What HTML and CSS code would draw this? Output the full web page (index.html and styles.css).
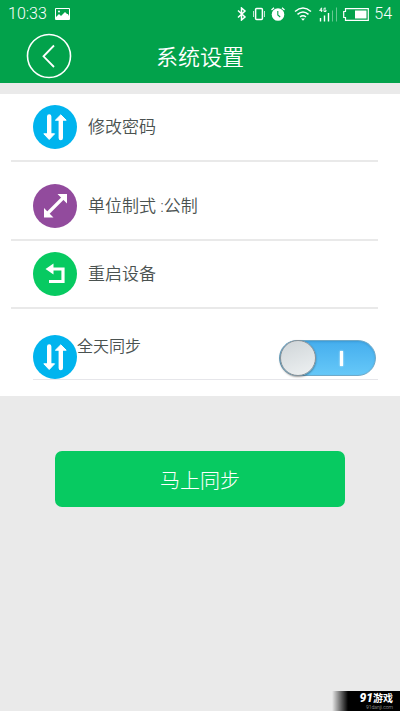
FILE: index.html
```html
<!DOCTYPE html>
<html lang="zh-CN">
<head>
<meta charset="utf-8">
<meta name="viewport" content="width=device-width, initial-scale=1">
<title>系统设置</title>
<link rel="stylesheet" href="styles.css">
</head>
<body>
<svg class="symbols" aria-hidden="true">
  <symbol id="sync" viewBox="0 0 44 44">
    <circle cx="22" cy="22" r="22" fill="#00b4ee"/>
    <path d="M16.200 11.500v18M27.800 33V15" stroke="#fff" stroke-width="4.400" stroke-linecap="round" fill="none"/>
    <path d="M10.800 28.800h10.800L16.200 34.500zM22.400 15.200h10.800L27.800 9.800z" fill="#fff" stroke="#fff" stroke-linejoin="round"/>
  </symbol>
</svg>
<header class="header">
  <div class="status">
    <span class="clock">10:33</span>
    <svg class="picture" width="15" height="12" viewBox="0 0 15 12"><path d="M.5.5h14v11H.5z" fill="none" stroke="#fff"/><path d="M1 11V9l3-3 2 2 4-4 2 2 1 0 1 2v3z" fill="#fff"/><circle cx="4" cy="3.500" r="1" fill="#fff"/></svg>
    <div class="indicators">
      <svg width="10" height="14" viewBox="0 0 10 14"><path d="M1 3.500l7 6.500-3.500 3V1L8 4 1 10.500" fill="none" stroke="#fff" stroke-width="1.500"/></svg>
      <svg width="14" height="14" viewBox="0 0 14 14"><rect x="3.600" y="1.600" width="6.800" height="10.800" rx="1" fill="none" stroke="#fff" stroke-width="1.500"/><path d="M1.500 4v6M12.500 4v6" stroke="#fff" opacity=".75"/></svg>
      <svg width="14" height="14" viewBox="0 0 14 14"><circle cx="7" cy="7.500" r="6.300" fill="#fff"/><path d="M.5 3L3 .7M13.500 3L11 .7" stroke="#fff" stroke-width="1.300"/><path d="M6.800 4v4l2.400 2" fill="none" stroke="#02a24b" stroke-width="1.100"/></svg>
      <svg class="wifi" width="18" height="14" viewBox="0 0 18 14"><path d="M1 4.500Q9-2.500 17 4.500M3.500 7.400Q9 2.700 14.500 7.400M6 10Q9 7.600 12 10" fill="none" stroke="#fff" stroke-width="1.500"/><path d="M7 11.400h4L9 13.700z" fill="#fff"/></svg>
      <svg class="signal" width="19" height="15" viewBox="0 0 19 15"><path d="M2.500.8L.6 3.600H3.400M2.600.8V5M7 1.200H5v3.300h2V3H6" fill="none" stroke="#fff" stroke-width=".9"/><path d="M1.500 11v3.500M5.500 8.500v6M9.500 6v8.500" stroke="#fff" stroke-width="1.400"/><path d="M13.500 3.500v11M17.500 .5v14" stroke="#fff" opacity=".4"/></svg>
      <svg class="battery" width="26" height="13" viewBox="0 0 26 13"><path d="M2.500 3.500V.7h22.800v11.600H2.500V9.500H.7v-6z" fill="none" stroke="#fff" stroke-width="1.200"/><path d="M12 2.500h11.500v8H12z" fill="#fff"/></svg>
      <span>54</span>
    </div>
  </div>
  <div class="titlebar">
    <button class="back" type="button" aria-label="返回"><svg width="46" height="46" viewBox="0 0 46 46"><circle cx="23" cy="23" r="21.500" fill="none" stroke="#fff" stroke-width="1.600"/><path d="M28 12.500L17.500 23.300 28 34" fill="none" stroke="#fff" stroke-width="1.800"/></svg></button>
    <h1 class="title">系统设置</h1>
  </div>
</header>
<main>
  <section class="panel">
    <button class="row" type="button"><svg class="icon"><use href="#sync"/></svg><span>修改密码</span></button>
    <button class="row row-tall" type="button"><svg class="icon" viewBox="0 0 44 44"><circle cx="22" cy="22" r="22" fill="#924b9d"/><path d="M15 29L30 14" stroke="#fff" stroke-width="3.200"/><path d="M24.500 10H34v9.500zM11 24v9.500h9.500z" fill="#fff"/></svg><span>单位制式 :公制</span></button>
    <button class="row" type="button"><svg class="icon" viewBox="0 0 44 44"><circle cx="22" cy="22" r="22" fill="#07ca61"/><path d="M19 17h11v12.500H16" fill="none" stroke="#fff" stroke-width="3.200"/><path d="M12.500 17l8-5.500v11z" fill="#fff"/></svg><span>重启设备</span></button>
    <div class="row-sync">
      <svg class="icon"><use href="#sync"/></svg>
      <label class="sync-label" for="all-day">全天同步</label>
      <input class="switch" id="all-day" type="checkbox" role="switch" checked>
    </div>
  </section>
  <div class="action"><button class="sync-now" type="button">马上同步</button></div>
</main>
<footer class="mark"><span class="mark-name"><b class="mark-num">91</b>游戏</span><span class="mark-site">91danji.com</span></footer>
</body>
</html>
```
FILE: styles.css
```css
* { box-sizing: border-box; }

body {
  margin: 0;
  min-height: 100vh;
  display: flex;
  flex-direction: column;
  background: #eaeaea;
  color: #4a5250;
  font-family: Roboto, "Noto Sans CJK SC", sans-serif;
  font-weight: 300;
}

button {
  border: 0;
  padding: 0;
  background: none;
  color: inherit;
  font: inherit;
  cursor: pointer;
}

svg { display: block; flex: none; }

.symbols { position: absolute; width: 0; height: 0; }

.header { background: #02a24b; color: #fff; }

.status {
  display: flex;
  align-items: center;
  height: 28px;
  padding: 0 8px;
  font-size: 16px;
  line-height: 28px;
}

.picture { margin-left: 8px; }

.indicators {
  display: flex;
  align-items: center;
  gap: 5px;
  margin-left: auto;
}

.wifi { margin-left: 4px; }
.signal { margin-left: 2px; }

.titlebar {
  display: grid;
  grid-template-columns: 72px 1fr 72px;
  align-items: center;
  height: 55px;
}

.back { justify-self: end; }

.title {
  margin: 0;
  padding-top: 4px;
  font-size: 22px;
  font-weight: 350;
  line-height: 32px;
  text-align: center;
}

.panel {
  margin-top: 11px;
  padding: 0 22px 16px 11px;
  background: #fff;
}

.row {
  display: flex;
  align-items: center;
  gap: 11px;
  width: 100%;
  padding: 11px 22px;
  border-bottom: 2px solid #e9e9e9;
  font-size: 17px;
  font-weight: 350;
  line-height: 24px;
}

.row-tall { padding-top: 22px; }

.icon { width: 44px; height: 44px; }

.row-sync {
  display: flex;
  align-items: flex-start;
  margin-left: 22px;
  padding-top: 26px;
  border-bottom: 1px solid #e6e6ea;
}

.sync-label { font-size: 16px; font-weight: 350; line-height: 24px; }

.switch {
  appearance: none;
  width: 97px;
  height: 36px;
  margin: 5px 2px 0 auto;
  border: 1px solid #6fa9c8;
  border-radius: 18px;
  background: linear-gradient(#45aeee, #66c8f8);
  box-shadow: inset 0 1px 2px #2d7fb866;
  display: flex;
  align-items: center;
  justify-content: space-between;
  cursor: pointer;
}

.switch::before {
  content: "";
  box-sizing: border-box;
  width: 36px;
  height: 36px;
  border: 1px solid #8b9297;
  border-radius: 50%;
  background: linear-gradient(160deg, #cfd5d8, #eef1f2);
  box-shadow: 0 1px 2px #0006;
}

.switch::after {
  content: "";
  width: 3px;
  height: 15px;
  margin-right: 32px;
  background: #fff;
  box-shadow: 0 0 2px #fff;
}

.action { padding: 55px 55px 0; }

.sync-now {
  display: block;
  width: 100%;
  height: 56px;
  border-radius: 7px;
  background: #07ca61;
  color: #fff;
  font-size: 20px;
}

.mark {
  display: flex;
  flex-direction: column;
  align-items: flex-end;
  align-self: flex-end;
  width: 68px;
  height: 20px;
  margin-top: auto;
  padding: 2px 7px 0 0;
  background: linear-gradient(90deg, #0000, #000 16px);
  color: #fff;
}

.mark-name { font-size: 10px; font-weight: 700; line-height: 11px; }
.mark-num { font-size: 12px; font-style: italic; font-weight: 900; }
.mark-site { font-size: 5px; line-height: 6px; color: #bbb; }
```
